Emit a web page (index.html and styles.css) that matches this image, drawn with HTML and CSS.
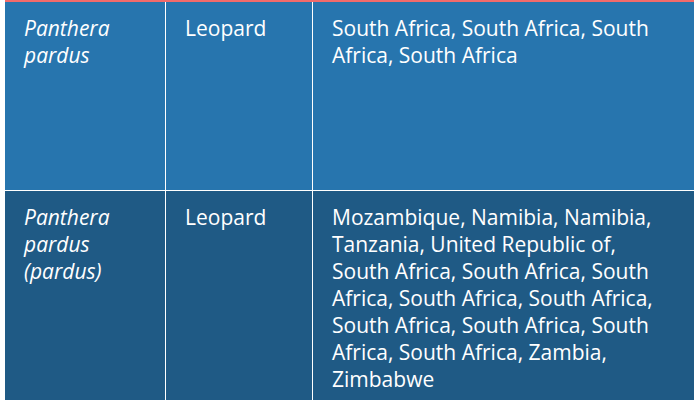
FILE: index.html
```html
<!DOCTYPE html>
<html>
<head>
<meta charset="utf-8">
<link rel="stylesheet" href="styles.css">
</head>
<body>
<div class="wrap">
<table class="species">
  <tbody>
    <tr class="row-light">
      <td class="c-sci"><em>Panthera pardus</em></td>
      <td class="c-name">Leopard</td>
      <td class="c-loc">South Africa, South Africa, South Africa, South Africa</td>
    </tr>
    <tr class="row-dark">
      <td class="c-sci"><em>Panthera pardus (pardus)</em></td>
      <td class="c-name">Leopard</td>
      <td class="c-loc">Mozambique, Namibia, Namibia, Tanzania, United Republic of, South Africa, South Africa, South Africa, South Africa, South Africa, South Africa, South Africa, South Africa, South Africa, Zambia, Zimbabwe</td>
    </tr>
  </tbody>
</table>
</div>
</body>
</html>
```
FILE: styles.css
```css
html, body {
  margin: 0;
  padding: 0;
  background: #ffffff;
}
.wrap {
  padding-left: 5px;
  width: 689px;
  height: 400px;
  overflow: hidden;
}
.species {
  border-collapse: collapse;
  border-top: 2px solid #f26b6b;
  width: 689px;
  table-layout: fixed;
  font-family: "Open Sans", Lato, sans-serif;
  font-size: 21px;
  line-height: 27px;
  color: #ffffff;
}
.species td {
  vertical-align: top;
  padding: 13px 19px 0 19px;
  border-left: 1px solid #ffffff;
}
.species td:first-child {
  border-left: none;
  width: 122px;
}
.species td.c-name {
  width: 108px;
}
.species td.c-loc {
  padding-right: 25px;
}
.row-light {
  background: #2775ae;
  height: 189px;
}
.row-dark {
  background: #1f5a85;
  border-top: 1px solid #ffffff;
}
.row-dark td {
  height: 220px;
}
em {
  font-style: italic;
}
```
